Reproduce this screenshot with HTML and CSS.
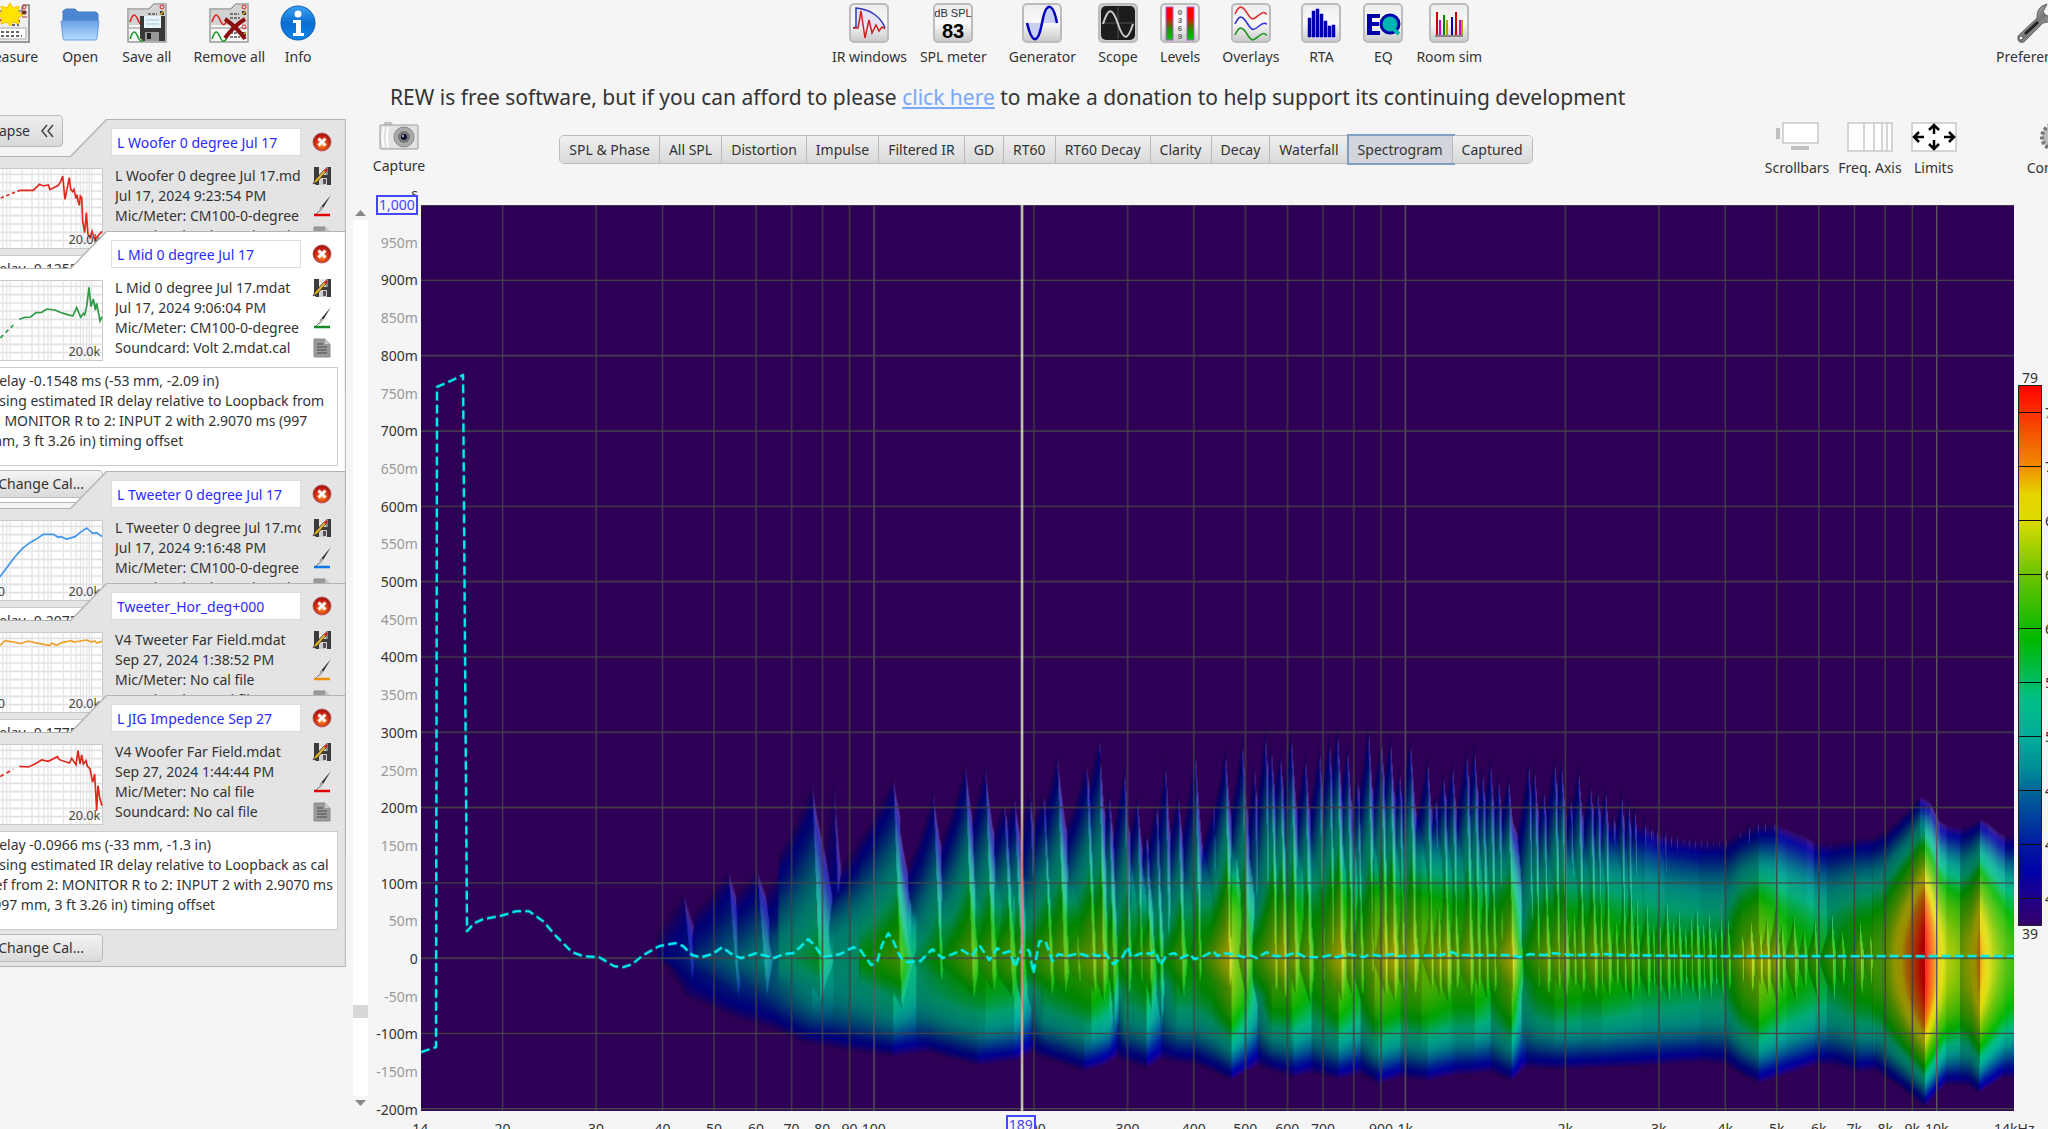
FILE: index.html
```
<!DOCTYPE html>
<html lang="en">
<head>
  <meta charset="UTF-8">
  <title>REW</title>
  <link rel="stylesheet" href="styles.css">
</head>
<body>
  <!-- shared symbols -->
  <svg class="defs" width="0" height="0">
    <defs>
      <linearGradient id="gBtn" x1="0" y1="0" x2="0" y2="1">
        <stop offset="0" stop-color="#ececec"/><stop offset=".5" stop-color="#fafafa"/><stop offset="1" stop-color="#c8c8c8"/>
      </linearGradient>
      <linearGradient id="gLevel" x1="0" y1="0" x2="0" y2="1">
        <stop offset="0" stop-color="#f00"/><stop offset=".3" stop-color="#f00"/><stop offset=".7" stop-color="#1a9a00"/><stop offset="1" stop-color="#00c000"/>
      </linearGradient>
      <linearGradient id="gFolder" x1="0" y1="0" x2="0" y2="1">
        <stop offset="0" stop-color="#6da4e6"/><stop offset="1" stop-color="#b4daff"/>
      </linearGradient>
      <linearGradient id="gInfo" x1="0" y1="0" x2="0" y2="1">
        <stop offset="0" stop-color="#3aa0f2"/><stop offset=".5" stop-color="#0a6fd0"/><stop offset="1" stop-color="#0a86e8"/>
      </linearGradient>
      <radialGradient id="gClose" cx=".5" cy=".65" r=".6">
        <stop offset="0" stop-color="#ff9a1e"/><stop offset=".6" stop-color="#d03018"/><stop offset="1" stop-color="#a81010"/>
      </radialGradient>
      <linearGradient id="gMetal" x1="0" y1="0" x2="1" y2="1">
        <stop offset="0" stop-color="#f2f2f2"/><stop offset=".5" stop-color="#777"/><stop offset="1" stop-color="#ddd"/>
      </linearGradient>
    </defs>
    <symbol id="sheets" viewBox="0 0 40 40">
      <path d="M1 6h21l5-5h12v38H1z" fill="#f7f7f7" stroke="#9a9a9a" stroke-width="1.5"/>
      <path d="M2 7h21l5-5h10v20H2z" fill="#d2d2d2"/>
      <path d="M2 25h36" stroke="#888"/>
      <path d="M3 19c3-9 5-9 8-2s5 5 7 1" fill="none" stroke="#d22" stroke-width="1.6"/>
      <path d="M3 36c3-9 5-9 8-2s5 4 7 1" fill="none" stroke="#1a9a2a" stroke-width="1.6"/>
      <path d="M21 11h9M21 15h10M21 30h9M21 34h10" stroke="#555" stroke-width="1.5" stroke-dasharray="3 1"/>
      <circle cx="35" cy="4" r="2" fill="none" stroke="#d22"/><circle cx="35" cy="24" r="2" fill="none" stroke="#d22"/>
      <path d="M33 8h4v4h-4zM33 29h4v4h-4z" fill="#333"/><path d="M33 12l4-4M33 33l4-4" stroke="#d8b020" stroke-width="1.5"/>
    </symbol>
    <symbol id="close" viewBox="0 0 20 20">
      <circle cx="10" cy="10" r="9" fill="url(#gClose)" stroke="#a55" stroke-width=".8"/>
      <path d="M6.500 6.500l7 7M13.500 6.500l-7 7" stroke="#fff" stroke-width="3"/>
    </symbol>
    <symbol id="save" viewBox="0 0 20 20">
      <path d="M2 1h17v18H4l-2-2z" fill="#3c3c3c"/>
      <path d="M7 1h7v8H7z" fill="#e8e8e8"/><path d="M14 1h2v8h-2z" fill="#888"/>
      <path d="M7 12h8v7H7z" fill="#cfcfcf"/><path d="M11 13h3v5h-3z" fill="#555"/>
      <path d="M1 18l2-4L12 4l2 2L5 16z" fill="#e2b52a" stroke="#222" stroke-width=".7"/>
      <path d="M12 4l2-2 2 2-2 2z" fill="#d22"/>
    </symbol>
    <symbol id="pen" viewBox="0 0 20 24">
      <path d="M19 1l-8 13-2 1-1-1z" fill="#2c2c2c"/><path d="M9.500 12l2 1.500-2 3-3 2.500 1-4z" fill="#aaa"/>
      <path d="M2 21h16" stroke="currentColor" stroke-width="2.500"/><path d="M7 17l-3 3" stroke="#777"/>
    </symbol>
    <symbol id="doc" viewBox="0 0 20 20">
      <path d="M2 1h11l5 5v13H2z" fill="#9a9a9a" stroke="#8c8c8c"/><path d="M13 1v5h5z" fill="#ccc"/>
      <path d="M5 6h6M5 9h10M5 12h10M5 15h10" stroke="#666" stroke-width="1.300"/>
    </symbol>
    <symbol id="grid" viewBox="-48 0 357 243">
      <path d="M-48 0h357v243h-357z" fill="#fff"/>
      <path d="M-48 19h357M-48 44h357M-48 69h357M-48 93h357M-48 118h357M-48 143h357M-48 168h357M-48 193h357M-48 218h357" stroke="#e2e2e2" stroke-width="5"/>
      <path d="M-30 0v243M8 0v243M20 0v243M30 0v243M66 0v243M96 0v243M116 0v243M132 0v243M144 0v243M153 0v243M190 0v243M213 0v243M228 0v243M241 0v243M250 0v243M260 0v243M268 0v243M275 0v243" stroke="#e6e6e6" stroke-width="4"/>
      <path d="M-48 1h356v241h-356" fill="none" stroke="#c8c8c8" stroke-width="4"/>
    </symbol>
  </svg>

  <div class="app">
    <!-- top toolbar -->
    <header class="toolbar">
      <div class="tools">
        <button class="tool">
          <svg width="40" height="40" viewBox="0 0 40 40"><path d="M1 8h30l3-6h5v37H1z" fill="#eee" stroke="#999" stroke-width="2"/><path d="M3 25h33v11H3z" fill="#fff" stroke="#aaa"/><path d="M2 17c4-4 7 3 12-1" stroke="#d22" fill="none" stroke-width="2"/><path d="M22 18h8M22 22h7M6 29h24M6 33h26" stroke="#333" stroke-width="1.500" stroke-dasharray="3 2"/><circle cx="34" cy="4" r="2" fill="none" stroke="#d22"/><path d="M32 8h4v3h-4zM32 14h5" stroke="#a33" fill="#333"/><path d="M20 0l3 5 6-2-1 6 5 3-5 3 1 6-6-2-3 4-3-4-6 2 1-6-5-3 5-3-1-6 6 2z" fill="#ffe400" stroke="#f8c400"/></svg>
          Measure</button>
        <button class="tool">
          <svg width="40" height="40" viewBox="0 0 40 40"><path d="M3 20V8l3-2h9l3 3h18l2 2v9z" fill="#4d86d0" stroke="#4478bd"/><path d="M1 18h38l-2 17q0 2-2 2H5q-2 0-2-2z" fill="url(#gFolder)" stroke="#6a9fe0"/></svg>
          Open</button>
        <button class="tool">
          <svg width="40" height="40" viewBox="0 0 40 40"><use href="#sheets"/><path d="M13 13h25v25H16l-3-3z" fill="#383838"/><path d="M17 13h17v12H17z" fill="#e8f4fc"/><path d="M19 17h13M19 21h13" stroke="#9cc"/><path d="M18 29h14v9H18z" fill="#999"/><path d="M20 30h4v6h-4z" fill="#222"/></svg>
          Save all</button>
        <button class="tool">
          <svg width="40" height="40" viewBox="0 0 40 40"><use href="#sheets"/><path d="M16 16c7 5 14 11 20 20M36 16c-8 5-14 11-20 19" stroke="#8c0e0e" stroke-width="4" fill="none"/></svg>
          Remove all</button>
        <button class="tool tight">
          <svg width="40" height="40" viewBox="0 0 40 40"><circle cx="20" cy="20" r="17" fill="url(#gInfo)" stroke="#0a5cb0"/><circle cx="20" cy="11" r="3.500" fill="#fff"/><path d="M15 17h8v13h3v3H15v-3h3V20h-3z" fill="#fff"/></svg>
          Info</button>
      </div>

      <div class="tools">
        <button class="tool">
          <svg width="40" height="40" viewBox="0 0 40 40"><rect x="1" y="1" width="38" height="38" rx="4" fill="url(#gBtn)" stroke="#bcbcbc" stroke-width="2"/><path d="M8 24V5c14 2 24 10 28 20z" fill="#e4e4f6"/><path d="M4 25l3-1V5c14 1 25 9 29 20" fill="none" stroke="#33b" stroke-width="1.500"/><path d="M4 25h5l3-17 4 27 4-18 3 13 4-8 3 6 3-4 3 2" fill="none" stroke="#c22" stroke-width="1.500"/></svg>
          IR windows</button>
        <button class="tool tight">
          <svg width="40" height="40" viewBox="0 0 40 40"><rect x="1" y="1" width="38" height="38" rx="4" fill="url(#gBtn)" stroke="#bcbcbc" stroke-width="2"/><text x="20" y="14" text-anchor="middle" class="ic-small">dB SPL</text><text x="20" y="35" text-anchor="middle" class="ic-num">83</text></svg>
          SPL meter</button>
        <button class="tool">
          <svg width="40" height="40" viewBox="0 0 40 40"><rect x="1" y="1" width="38" height="38" rx="4" fill="url(#gBtn)" stroke="#bcbcbc" stroke-width="2"/><path d="M5 20c5 18 10 26 15 0zM20 20c4-22 11-22 15 0z" fill="#c9cff2"/><path d="M5 20c5 21 11 22 15 0s11-21 15 0" fill="none" stroke="#00b" stroke-width="2.500"/></svg>
          Generator</button>
        <button class="tool">
          <svg width="40" height="40" viewBox="0 0 40 40"><rect x="1" y="1" width="38" height="38" rx="4" fill="#ccc" stroke="#bcbcbc" stroke-width="2"/><rect x="3" y="3" width="34" height="34" rx="5" fill="#1c1c1c"/><path d="M20 4v32M4 20h32" stroke="#555"/><path d="M5 21c5-16 9-18 15 0s10 16 15 0" fill="none" stroke="#ccc" stroke-width="2"/></svg>
          Scope</button>
        <button class="tool">
          <svg width="40" height="40" viewBox="0 0 40 40"><rect x="1" y="1" width="38" height="38" rx="4" fill="url(#gBtn)" stroke="#bcbcbc" stroke-width="2"/><rect x="6" y="4" width="7" height="33" fill="url(#gLevel)" stroke="#a6c"/><rect x="27" y="4" width="7" height="33" fill="url(#gLevel)" stroke="#a6c"/><text x="20" y="12" text-anchor="middle" class="ic-tiny">0</text><text x="20" y="20" text-anchor="middle" class="ic-tiny">3</text><text x="20" y="28" text-anchor="middle" class="ic-tiny">6</text><text x="20" y="36" text-anchor="middle" class="ic-tiny">9</text></svg>
          Levels</button>
        <button class="tool">
          <svg width="40" height="40" viewBox="0 0 40 40"><rect x="1" y="1" width="38" height="38" rx="4" fill="url(#gBtn)" stroke="#bcbcbc" stroke-width="2"/><g fill="none" stroke-width="1.600"><path d="M4 11c4-9 7-9 12-1s6 7 12 2 6-1 8-1" stroke="#d33"/><path d="M4 21c4-9 7-9 12-1s6 8 12 3 6-2 8-2" stroke="#33d"/><path d="M4 32c4-9 7-9 12-1s6 7 12 2 6-1 8-1" stroke="#292"/></g></svg>
          Overlays</button>
        <button class="tool">
          <svg width="40" height="40" viewBox="0 0 40 40"><rect x="1" y="1" width="38" height="38" rx="4" fill="url(#gBtn)" stroke="#bcbcbc" stroke-width="2"/><path d="M7 34V15h3v19zM11 34V8h3v26zM15 34V6h3v28zM19 34V11h3v23zM23 34V18h3v16zM27 34V23h3v11zM31 34V22h3v12z" fill="#00a" stroke="#00a" stroke-width=".5"/></svg>
          RTA</button>
        <button class="tool">
          <svg width="40" height="40" viewBox="0 0 40 40"><rect x="1" y="1" width="38" height="38" rx="4" fill="url(#gBtn)" stroke="#bcbcbc" stroke-width="2"/><path d="M4 11h13v4H9v4h7v4H9v5h8v4H4z" fill="#00a"/><circle cx="27" cy="21" r="9" fill="#00b4b4" stroke="#00a" stroke-width="3"/><path d="M28 24l8 7" stroke="#00b4b4" stroke-width="4"/></svg>
          EQ</button>
        <button class="tool tight">
          <svg width="40" height="40" viewBox="0 0 40 40"><rect x="1" y="1" width="38" height="38" rx="4" fill="url(#gBtn)" stroke="#bcbcbc" stroke-width="2"/><g stroke-width="2"><path d="M8 9v23M27 9v23" stroke="#c00"/><path d="M11 17v15M31 17v15" stroke="#c0c"/><path d="M15 12v20" stroke="#080"/><path d="M18 17v15M33 17v15" stroke="#b90"/><path d="M23 14v18" stroke="#00b"/></g><path d="M6 33h28" stroke="#333"/></svg>
          Room sim</button>
      </div>

      <div class="tools">
        <button class="tool">
          <svg width="40" height="40" viewBox="0 0 40 40"><path d="M3 33L22 15q-1-11 10-14l-4 8 4 4 7-3q0 9-11 10L9 39q-7 2-6-6z" fill="url(#gMetal)" stroke="#666"/><path d="M10 31l13-12" stroke="#222" stroke-width="3"/><circle cx="6" cy="35" r="2" fill="#fff" stroke="#555"/></svg>
          Preferences</button>
      </div>
    </header>

    <p class="donate">REW is free software, but if you can afford to please <a href="#donate">click here</a> to make a donation to help support its continuing development</p>

    <main class="main">
      <!-- measurements -->
      <aside class="sidebar">
        <button class="collapse">Collapse
          <svg width="14" height="14" viewBox="0 0 14 14"><path d="M7 1L2 7l5 6M13 1L8 7l5 6" fill="none" stroke="#444" stroke-width="1.500"/></svg>
        </button>

        <section class="card short">
          <div class="card-head"><input type="text" aria-label="Measurement name" value="L Woofer 0 degree Jul 17"><button class="icon" aria-label="Remove"><svg width="20" height="20"><use href="#close"/></svg></button></div>
          <div class="card-body">
            <svg class="thumb" viewBox="-48 0 357 243"><use href="#grid" x="-48" width="357" height="243"/><g fill="none" stroke="#e0281e" stroke-width="5"><path d="M-48 110L0 91L60 67" stroke-dasharray="10 8"/><path d="M60 67L100 67L118 49L130 54L145 51L150 65L175 52L182 40L188 24L195 94L208 29L212 64L218 71L222 64L228 92L231 80L234 99L238 112L241 84L245 89L248 160L254 194L259 134L264 199L270 209L276 190L284 215L306 190"/></g><text x="301" y="227" text-anchor="end">20.0k</text></svg>
            <div class="info">L Woofer 0 degree Jul 17.mdat<br>Jul 17, 2024 9:23:54 PM<br>Mic/Meter: CM100-0-degree<br>Soundcard: Volt 2.mdat.cal</div>
            <div class="icons"><button class="icon" aria-label="Save"><svg width="20" height="20"><use href="#save"/></svg></button><button class="icon red" aria-label="Colour"><svg width="20" height="24"><use href="#pen"/></svg></button><button class="icon" aria-label="Notes"><svg width="20" height="20"><use href="#doc"/></svg></button></div>
          </div>
          <div class="note">Delay -0.1255 ms</div>
        </section>

        <section class="card selected">
          <div class="card-head"><input type="text" aria-label="Measurement name" value="L Mid 0 degree Jul 17"><button class="icon" aria-label="Remove"><svg width="20" height="20"><use href="#close"/></svg></button></div>
          <div class="card-body">
            <svg class="thumb" viewBox="-48 0 357 243"><use href="#grid" x="-48" width="357" height="243"/><g fill="none" stroke="#2f9a44" stroke-width="5"><path d="M-30 205L5 170L40 135" stroke-dasharray="12 10"/><path d="M58 118L75 112L92 111L108 98L125 97L140 87L165 90L180 97L200 103L218 108L230 83L242 112L250 100L254 105L260 80L267 22L273 80L280 57L286 90L290 70L300 123L306 110"/></g><text x="301" y="227" text-anchor="end">20.0k</text></svg>
            <div class="info">L Mid 0 degree Jul 17.mdat<br>Jul 17, 2024 9:06:04 PM<br>Mic/Meter: CM100-0-degree<br>Soundcard: Volt 2.mdat.cal</div>
            <div class="icons"><button class="icon" aria-label="Save"><svg width="20" height="20"><use href="#save"/></svg></button><button class="icon green" aria-label="Colour"><svg width="20" height="24"><use href="#pen"/></svg></button><button class="icon" aria-label="Notes"><svg width="20" height="20"><use href="#doc"/></svg></button></div>
          </div>
          <div class="note">Delay -0.1548 ms (-53 mm, -2.09 in)<br>Using estimated IR delay relative to Loopback from<br>2: MONITOR R to 2: INPUT 2 with 2.9070 ms (997<br>mm, 3 ft 3.26 in) timing offset</div>
          <button class="change">Change Cal...</button>
        </section>

        <section class="card short">
          <div class="card-head"><input type="text" aria-label="Measurement name" value="L Tweeter 0 degree Jul 17"><button class="icon" aria-label="Remove"><svg width="20" height="20"><use href="#close"/></svg></button></div>
          <div class="card-body">
            <svg class="thumb" viewBox="-48 0 357 243"><use href="#grid" x="-48" width="357" height="243"/><g fill="none" stroke="#3f94f0" stroke-width="5"><path d="M-30 200L0 170L45 110L70 83L90 68L108 58L130 43L160 43L175 52L182 50L200 57L225 50L240 38L260 24L270 33L278 40L290 38L306 50"/></g><text x="15" y="227" text-anchor="end">20</text><text x="301" y="227" text-anchor="end">20.0k</text></svg>
            <div class="info">L Tweeter 0 degree Jul 17.mdat<br>Jul 17, 2024 9:16:48 PM<br>Mic/Meter: CM100-0-degree<br>Soundcard: Volt 2.mdat.cal</div>
            <div class="icons"><button class="icon" aria-label="Save"><svg width="20" height="20"><use href="#save"/></svg></button><button class="icon blue" aria-label="Colour"><svg width="20" height="24"><use href="#pen"/></svg></button><button class="icon" aria-label="Notes"><svg width="20" height="20"><use href="#doc"/></svg></button></div>
          </div>
          <div class="note">Delay -0.2073 ms</div>
        </section>

        <section class="card short">
          <div class="card-head"><input type="text" aria-label="Measurement name" value="Tweeter_Hor_deg+000"><button class="icon" aria-label="Remove"><svg width="20" height="20"><use href="#close"/></svg></button></div>
          <div class="card-body">
            <svg class="thumb" viewBox="-48 0 357 243"><use href="#grid" x="-48" width="357" height="243"/><g fill="none" stroke="#f0a030" stroke-width="5"><path d="M-40 60L0 40L15 26L50 32L60 35L85 27L105 32L135 38L150 40L155 33L170 40L185 32L215 26L220 30L260 24L275 30L285 27L290 33L306 28"/></g><text x="15" y="227" text-anchor="end">20</text><text x="301" y="227" text-anchor="end">20.0k</text></svg>
            <div class="info">V4 Tweeter Far Field.mdat<br>Sep 27, 2024 1:38:52 PM<br>Mic/Meter: No cal file<br>Soundcard: No cal file</div>
            <div class="icons"><button class="icon" aria-label="Save"><svg width="20" height="20"><use href="#save"/></svg></button><button class="icon orange" aria-label="Colour"><svg width="20" height="24"><use href="#pen"/></svg></button><button class="icon" aria-label="Notes"><svg width="20" height="20"><use href="#doc"/></svg></button></div>
          </div>
          <div class="note">Delay -0.1775 ms</div>
        </section>

        <section class="card">
          <div class="card-head"><input type="text" aria-label="Measurement name" value="L JIG Impedence Sep 27"><button class="icon" aria-label="Remove"><svg width="20" height="20"><use href="#close"/></svg></button></div>
          <div class="card-body">
            <svg class="thumb" viewBox="-48 0 357 243"><use href="#grid" x="-48" width="357" height="243"/><g fill="none" stroke="#e0281e" stroke-width="5"><path d="M-40 115L0 98L40 75" stroke-dasharray="12 10"/><path d="M58 67L85 69L105 60L125 48L145 52L172 38L178 47L208 57L215 43L228 62L234 20L240 60L245 33L250 60L258 50L262 66L270 75L278 115L284 90L290 200L294 125L300 165L306 185"/></g><text x="301" y="227" text-anchor="end">20.0k</text></svg>
            <div class="info">V4 Woofer Far Field.mdat<br>Sep 27, 2024 1:44:44 PM<br>Mic/Meter: No cal file<br>Soundcard: No cal file</div>
            <div class="icons"><button class="icon" aria-label="Save"><svg width="20" height="20"><use href="#save"/></svg></button><button class="icon red" aria-label="Colour"><svg width="20" height="24"><use href="#pen"/></svg></button><button class="icon" aria-label="Notes"><svg width="20" height="20"><use href="#doc"/></svg></button></div>
          </div>
          <div class="note">Delay -0.0966 ms (-33 mm, -1.3 in)<br>Using estimated IR delay relative to Loopback as cal<br>ref from 2: MONITOR R to 2: INPUT 2 with 2.9070 ms<br>(997 mm, 3 ft 3.26 in) timing offset</div>
          <button class="change">Change Cal...</button>
        </section>
      </aside>

      <!-- graph -->
      <section class="graph">
        <div class="graph-bar">
          <button class="tool capture">
            <svg width="40" height="28" viewBox="0 0 40 28"><path d="M6 0h6v4H6z" fill="#ccc" stroke="#aaa"/><rect x="1" y="3" width="38" height="24" rx="1" fill="#e2e2e2" stroke="#999"/><path d="M5 5q-3 10 0 20M9 5q-2 10 0 20" stroke="#fff" stroke-width="2" fill="none"/><circle cx="25" cy="15" r="10" fill="#aaa" stroke="#888"/><circle cx="25" cy="15" r="6" fill="#777"/><circle cx="25" cy="15" r="3" fill="#113"/><circle cx="24" cy="14" r="1" fill="#cde"/></svg>
            Capture</button>
          <nav class="tabs">
            <button>SPL &amp; Phase</button><button>All SPL</button><button>Distortion</button><button>Impulse</button><button>Filtered IR</button><button>GD</button><button>RT60</button><button>RT60 Decay</button><button>Clarity</button><button>Decay</button><button>Waterfall</button><button class="active">Spectrogram</button><button>Captured</button>
          </nav>
          <div class="view-tools">
            <button class="tool">
              <svg width="46" height="30" viewBox="0 0 46 30"><rect x="9" y="1" width="35" height="20" fill="#fff" stroke="#c8c8c8" stroke-width="1.500"/><path d="M2 6h4v11H2zM17 24h18v4H17z" fill="#c0c0c0"/></svg>
              Scrollbars</button>
            <button class="tool">
              <svg width="46" height="30" viewBox="0 0 46 30"><path d="M1 1h44v28H1zM17 1v28M27 1v28M35 1v28M40 1v28" fill="#fff" stroke="#c8c8c8" stroke-width="1.500"/></svg>
              Freq. Axis</button>
            <button class="tool">
              <svg width="46" height="30" viewBox="0 0 46 30"><rect x="1" y="1" width="44" height="28" fill="#fff" stroke="#c8c8c8" stroke-width="1.500"/><path d="M23 12V4M18 8l5-5 5 5M23 18v8M18 22l5 5 5-5M13 15H4M8 10l-5 5 5 5M33 15h9M38 10l5 5-5 5" fill="none" stroke="#000" stroke-width="2.500"/></svg>
              Limits</button>
            <button class="tool controls">
              <svg width="30" height="30" viewBox="0 0 30 30"><circle cx="15" cy="15" r="12" fill="#bbb" stroke="#777" stroke-width="4" stroke-dasharray="3 2"/><circle cx="15" cy="15" r="5" fill="#f5f5f5" stroke="#888"/></svg>
              Controls</button>
          </div>
        </div>

        <div class="plot">
          <div class="scroll">
            <button aria-label="Scroll up"><svg width="11" height="7" viewBox="0 0 11 7"><path d="M0 7l5.500-6L11 7z" fill="#888"/></svg></button>
            <div class="track"><div class="knob"></div></div>
            <button aria-label="Scroll down"><svg width="11" height="7" viewBox="0 0 11 7"><path d="M0 0l5.500 6L11 0z" fill="#888"/></svg></button>
          </div>
          <div class="y-axis" id="yAxis"></div>
          <canvas id="spectrogram" width="1592" height="907"></canvas>
          <div class="legend">
            <span>79</span>
            <ul>
              <li>77</li><li>73</li><li>69</li><li>65</li><li>61</li><li>57</li><li>53</li><li>49</li><li>45</li><li>41</li>
            </ul>
            <span>39</span>
          </div>
          <div class="x-axis" id="xAxis"></div>
        </div>
      </section>
    </main>
  </div>
  <script src="script.js"></script>
</body>
</html>
```
FILE: styles.css
```
* {
  box-sizing: border-box;
}
body {
  margin: 0;
  height: 100vh;
  overflow: hidden;
  background: #f5f5f5;
  color: #333;
  font-family: "Noto Sans", "Open Sans", sans-serif;
  font-size: 14px;
  line-height: 20px;
}
button {
  font: inherit;
  color: inherit;
  background: none;
  border: none;
  padding: 0;
  white-space: nowrap;
}
.defs {
  position: absolute;
}
.app {
  display: flex;
  flex-direction: column;
  height: 100vh;
  margin: 0 -34px 0 -24px;
}

/* top toolbar */
.toolbar {
  display: flex;
  justify-content: space-between;
  padding: 3px 8px 0 5px;
}
.tools {
  display: flex;
  gap: 22px;
}
.tool {
  display: flex;
  flex-direction: column;
  align-items: center;
  gap: 4px;
}
.tool.tight {
  margin-left: -9px;
}
.ic-small {
  font: 11px "Liberation Sans", sans-serif;
  fill: #333;
}
.ic-num {
  font: bold 20px "Liberation Sans", sans-serif;
}
.ic-tiny {
  font: bold 8px "Liberation Sans", sans-serif;
  fill: #666;
}
.donate {
  margin: 16px 0 4px;
  padding-left: 414px;
  font-size: 21px;
  line-height: 28px;
  white-space: nowrap;
}
.donate a {
  color: #7ba7f7;
}

.main {
  flex: 1;
  display: flex;
  min-height: 0;
}

/* measurement list */
.sidebar {
  flex: 0 0 369px;
  padding-left: 4px;
}
.collapse {
  display: flex;
  align-items: center;
  justify-content: flex-end;
  gap: 10px;
  width: 83px;
  height: 32px;
  margin-bottom: -28px;
  padding-right: 8px;
  background: linear-gradient(#eee, #d9d9d9);
  border: 1px solid #bbb;
  border-radius: 4px;
}
.collapse svg {
  flex-shrink: 0;
}
.card {
  position: relative;
  height: 272px;
  padding: 9px 8px 0 4px;
  background: #b4b4b4;
  clip-path: polygon(0 37px, 90px 37px, 126px 0, 100% 0, 100% 100%, 0 100%);
}
.card::before {
  content: "";
  position: absolute;
  inset: 0;
  background: #e4e4e4;
  clip-path: polygon(0 38px, 91px 38px, 127px 1px, calc(100% - 1px) 1px, calc(100% - 1px) calc(100% - 1px), 0 calc(100% - 1px));
}
.card > * {
  position: relative;
}
.card.selected {
  margin-bottom: -32px;
}
.card.selected::before {
  background: #fff;
}
.card.short {
  margin-bottom: -160px;
}
.card-head {
  display: flex;
  align-items: center;
  gap: 11px;
  padding-left: 127px;
}
.card-head input {
  width: 190px;
  height: 28px;
  padding: 0 5px;
  border: 1px solid #dcdcdc;
  background: #fff;
  color: #2a2aff;
  font: inherit;
}
.icon {
  display: flex;
}
.card-body {
  display: flex;
  margin-top: 12px;
  height: 84px;
}
.thumb {
  width: 119px;
  height: 81px;
}
.thumb text {
  font-size: 38px;
  fill: #444;
}
.info {
  width: 186px;
  margin: -2px 11px 0 12px;
  height: 84px;
  overflow: hidden;
  white-space: nowrap;
}
.icons {
  display: flex;
  flex-direction: column;
  gap: 8px;
  margin-top: -2px;
}
.red { color: #e00000; }
.green { color: #148a28; }
.blue { color: #0a78e8; }
.orange { color: #f09000; }
.note {
  height: 99px;
  margin-top: 3px;
  padding: 3px 4px;
  background: #fff;
  border: 1px solid #ccc;
  white-space: nowrap;
  overflow: hidden;
}
.change {
  width: 119px;
  height: 28px;
  margin-top: 4px;
  padding-right: 18px;
  text-align: right;
  background: linear-gradient(#f4f4f4, #dadada);
  border: 1px solid #bbb;
  border-radius: 4px;
}

/* graph */
.graph {
  flex: 1;
  display: flex;
  flex-direction: column;
  padding-left: 7px;
}
.graph-bar {
  display: flex;
  align-items: flex-start;
  height: 90px;
  padding: 7px 0 0 20px;
}
.graph-bar .tool {
  gap: 6px;
}
.tabs {
  display: flex;
  margin: 13px auto 0 134px;
  border: 1px solid #bbb;
  border-radius: 5px;
}
.tabs button {
  height: 27px;
  padding: 0 9px;
  background: linear-gradient(#f0f0f0, #d9d9d9);
  border-right: 1px solid #bbb;
}
.tabs button:first-child {
  border-radius: 4px 0 0 4px;
}
.tabs button:last-child {
  border-right: none;
  border-radius: 0 4px 4px 0;
}
.tabs .active {
  background: #d2d6dc;
  box-shadow: 0 0 0 2px #7f9fc4;
}
.view-tools {
  display: flex;
  gap: 9px;
}
.view-tools .controls {
  margin-left: 61px;
}
.plot {
  flex: 1;
  display: grid;
  grid-template-columns: 15px 53px 1fr 68px;
  grid-template-rows: 1fr 18px;
  min-height: 0;
}
.scroll {
  display: flex;
  flex-direction: column;
}
.scroll button {
  display: flex;
  align-items: center;
  justify-content: center;
  height: 15px;
}
.track {
  flex: 1;
  background: #fff;
}
.knob {
  height: 13px;
  margin-top: 785px;
  background: #d8d8d8;
}
.y-axis {
  display: flex;
  flex-direction: column;
  justify-content: space-between;
  align-items: flex-end;
  margin: -10px 3px -9px 0;
  position: relative;
}
.y-axis .minor {
  color: #999;
}
.unit {
  position: absolute;
  right: 0;
  top: -11px;
}
.marker {
  background: #f5f5f5;
  border: 2px solid #4646ff;
  color: #4646ff;
  line-height: 16px;
  padding: 0 1px;
  position: relative;
}
#spectrogram {
  width: 100%;
  height: 100%;
  min-height: 0;
}
.x-axis {
  grid-column: 3;
  position: relative;
}
.x-axis span {
  position: absolute;
  top: 8px;
  transform: translateX(-50%);
}
.x-axis .marker {
  top: 4px;
  position: absolute;
}
.legend {
  display: flex;
  flex-direction: column;
  padding: 165px 0 0 4px;
  line-height: 15px;
}
.legend span {
  width: 24px;
  text-align: center;
}
.legend ul {
  display: flex;
  flex-direction: column;
  flex: 0 0 73%;
  margin: 0;
  padding: 0;
  width: 24px;
  list-style: none;
  outline: 1px solid #222;
  outline-offset: -1px;
  background: linear-gradient(#f00 0%, #f08c00 15%, #e8d200 20%, #dcdc00 25%, #6cc400 35%, #00b800 47%, #00bf86 58%, #00a99a 66%, #008c98 71%, #00679a 75%, #0019a0 85%, #0000a8 90%, #20008a 95%, #330068 100%);
}
.legend li {
  flex: 1;
  display: flex;
  align-items: center;
  gap: 3px;
}
.legend li::before {
  content: "";
  flex: 0 0 24px;
  height: 1px;
  background: #111;
}
```
FILE: script.js
```
// graph area in window pixels
const LEFT = 421, TOP = 205, W = 1592, H = 907;
const ZERO = 959;   // y of 0 s
const X100 = 873.7; // x of 100 Hz
const DECADE = 531;

const canvas = document.getElementById('spectrogram');
const ctx = canvas.getContext('2d');

function freqX(f) {
  return X100 + DECADE * Math.log10(f / 100);
}

// colour scale, level in dB
const scale = [
  [39, 51, 0, 100], [41, 32, 0, 138], [43, 0, 0, 168], [45, 0, 25, 160], [49, 0, 103, 154],
  [51, 0, 140, 152], [53, 0, 169, 154], [56, 0, 191, 134], [60, 0, 184, 0], [65, 108, 196, 0],
  [69, 220, 220, 0], [71, 232, 210, 0], [73, 240, 140, 0], [77, 255, 50, 0], [79, 255, 0, 0]
];

function interp(table, x, col) {
  if (x <= table[0][0]) return table[0][col];
  for (let i = 1; i < table.length; i++) {
    if (x <= table[i][0]) {
      const a = table[i - 1], b = table[i];
      const t = (x - a[0]) / (b[0] - a[0]);
      return a[col] + (b[col] - a[col]) * t;
    }
  }
  return table[table.length - 1][col];
}

// peak level over x
const level = [
  [655, 40.5], [668, 42], [690, 45], [727, 48], [756, 49], [787, 53], [811, 56], [832, 55], [864, 57], [892, 60],
  [915, 57], [932, 59], [957, 61], [984, 62], [1013, 61], [1030, 55], [1042, 61], [1056, 62], [1090, 64],
  [1108, 62], [1116, 53], [1123, 60], [1145, 62], [1160, 55], [1175, 61], [1194, 61], [1212, 63], [1230, 68],
  [1245, 63], [1256, 57], [1270, 65], [1290, 65], [1310, 62], [1337, 66], [1359, 62], [1373, 67], [1399, 65],
  [1420, 66], [1450, 64], [1473, 64], [1489, 62], [1510, 67], [1520, 58], [1535, 62], [1553, 64], [1580, 63],
  [1600, 63], [1640, 61], [1700, 60], [1724, 60], [1740, 65], [1757, 67], [1765, 66], [1785, 63], [1812, 61],
  [1825, 60], [1857, 63], [1880, 64], [1900, 71], [1923, 80], [1935, 72], [1944, 68], [1958, 66], [1968, 68],
  [1978, 73], [1990, 68], [2003, 64], [2013, 62]
];

// lower edge over x
const lower = [
  [655, 958], [668, 970], [686, 1000], [712, 1010], [739, 1022], [770, 1030], [802, 1044], [846, 1052], [891, 1058],
  [927, 1054], [976, 1067], [1016, 1062], [1030, 1055], [1083, 1073], [1100, 1068], [1116, 1060], [1145, 1070],
  [1160, 1062], [1194, 1066], [1230, 1082], [1256, 1068], [1292, 1079], [1310, 1075], [1337, 1081], [1359, 1076],
  [1377, 1086], [1399, 1079], [1426, 1083], [1453, 1077], [1489, 1074], [1510, 1083], [1524, 1070], [1564, 1071],
  [1640, 1068], [1698, 1064], [1724, 1066], [1739, 1076], [1757, 1085], [1773, 1080], [1813, 1067], [1833, 1067],
  [1857, 1074], [1873, 1072], [1900, 1090], [1923, 1108], [1943, 1087], [1967, 1087], [1977, 1095], [2000, 1080], [2013, 1080]
];

// upper edge between the ridges
const upper = [
  [655, 958], [668, 920], [700, 925], [740, 920], [775, 905], [800, 860], [825, 895], [860, 850], [873, 900], [888, 840], [910, 885],
  [925, 880], [960, 845], [990, 850], [1012, 840], [1030, 880], [1060, 850], [1090, 840], [1116, 890], [1130, 840],
  [1160, 870], [1194, 840], [1210, 845], [1235, 820], [1256, 850], [1300, 815], [1340, 810], [1400, 810], [1460, 810],
  [1510, 815], [1522, 850], [1540, 820], [1600, 820], [1643, 825], [1663, 835], [1697, 840], [1725, 840], [1738, 832],
  [1756, 824], [1773, 823], [1790, 830], [1805, 836], [1812, 841], [1830, 842], [1858, 837], [1870, 837], [1885, 830],
  [1900, 816], [1910, 806], [1918, 796], [1928, 801], [1938, 820], [1945, 824], [1960, 827], [1968, 824], [1978, 818],
  [1986, 822], [1995, 830], [2003, 835], [2013, 834]
];

// decay ridges: x, top and level where it is not the one of the curve above
const ridges = [
  [682, 887], [727, 867], [756, 867], [787, 850, 51], [811, 780, 59], [832, 762, 46], [864, 828, 58], [892, 774, 64], [910, 866, 54], [923, 862, 55],
  [932, 787], [957, 815, 57], [964, 758], [984, 762], [1003, 800], [1013, 792], [1028, 780, 56], [1042, 790], [1050, 772, 55],
  [1056, 750], [1070, 830], [1085, 758], [1098, 731], [1108, 786], [1123, 759], [1136, 791], [1145, 830], [1155, 797], [1164, 750],
  [1177, 788], [1194, 740], [1212, 801], [1224, 743], [1241, 731], [1253, 751, 58], [1264, 720], [1270, 737], [1279, 745],
  [1290, 724], [1304, 747], [1318, 737], [1328, 731], [1336, 721], [1346, 737], [1356, 770], [1367, 716], [1380, 730], [1389, 730],
  [1398, 762], [1409, 731], [1426, 750], [1434, 790], [1442, 767], [1451, 755], [1465, 741], [1473, 737], [1481, 762], [1489, 753],
  [1497, 769], [1507, 771], [1527, 750], [1533, 758], [1542, 782], [1553, 750], [1560, 755], [1569, 790], [1577, 760], [1589, 777],
  [1596, 782], [1604, 779], [1612, 805], [1620, 783], [1627, 793], [1633, 798], [1643, 813], [1649, 818], [1655, 820], [1663, 823],
  [1669, 828], [1675, 829], [1681, 833], [1687, 832], [1693, 834], [1699, 835], [1705, 835], [1711, 836], [1717, 836],
  [1724, 836], [1738, 827], [1747, 818], [1756, 816], [1763, 817], [1772, 818], [1778, 824], [1790, 829], [1800, 835],
  [1811, 839], [1828, 839], [1838, 840], [1856, 835], [1866, 836]
];

const ridgeLevels = ridges.map((r, i) => {
  return r[2] || Math.min(interp(level, r[0], 1) + 2 + (i * 7 % 5) * 0.5, 70);
});

function columnLevels(x) {
  const p = interp(level, x, 1) - (x > 1870 ? 0 : 1);
  const lo = interp(lower, x, 1) - ZERO;
  const up = ZERO - interp(upper, x, 1);
  const near = [];
  const reach = x < 950 ? 34 : 22;
  ridges.forEach((r, i) => {
    if (Math.abs(x - r[0]) < reach) near.push(i);
  });
  const wide = x < 900 ? 0.3 : x < 1100 ? 0.5 : x < 1600 ? 0.8 : 1;
  if (lo <= 0 || up <= 0) return () => 39;
  return function (y) {
    const h = ZERO - y;
    let v;
    if (h < 0) {
      v = 39 + (p - 39) * (1 - Math.pow(-h / lo, 2.3));
    } else {
      v = 39 + (p - 39) * (1 - Math.pow(h / up, 2));
    }
    for (const i of near) {
      const top = ZERO - ridges[i][1];
      const pi = ridgeLevels[i];
      // ridge leans to the right as it gets closer to 0
      const lean = x > 1600 ? 3 : x < 1100 ? 7 : 4;
      const cx = ridges[i][0] + lean * (1 - Math.max(h, -60) / top);
      let d = x - cx;
      d = d < 0 ? -d * 0.5 : d * 1.7;
      let u;
      if (h >= 0) u = 39 + (pi - 39) * (1 - Math.pow(h / top, 1.2)) - d * wide * (0.7 + h / 110);
      else u = 39 + (pi - 39) * (1 - Math.pow(-h / lo, 1.35)) - d * wide * 0.7;
      if (u > v) v = u;
    }
    return Math.max(v, 39);
  };
}

function drawSpectrogram() {
  const img = ctx.createImageData(W, H);
  const data = img.data;
  let prev = columnLevels(LEFT - 1);
  for (let i = 0; i < W; i++) {
    const cur = columnLevels(LEFT + i);
    for (let j = 0; j < H; j++) {
      const y = TOP + j;
      const o = (j * W + i) * 4;
      let r = 46, g = 0, b = 85;
      if (y > 700 && i > 225) {
        const v = cur(y);
        if (v > 39) {
          const slope = v - prev(y);
          r = interp(scale, v, 1);
          g = interp(scale, v, 2);
          b = interp(scale, v, 3);
          // light comes from the right
          const t = slope / (Math.abs(slope) + 0.22);
          const dark = t > 0 ? 0.76 - 0.14 * t : 0.76 + 0.24 * Math.min(1, -t * 2);
          const white = t < 0 ? 0.3 * t * t * (y > ZERO ? Math.max(0, 1 - (y - ZERO) / 80) : 1) : 0;
          r = r * dark * (1 - white) + 255 * white;
          g = g * dark * (1 - white) + 255 * white;
          b = b * dark * (1 - white) + 255 * white;
          const fade = Math.min(1, (v - 39) / 1.5);
          r = 46 + (r - 46) * fade;
          g = g * fade;
          b = 85 + (b - 85) * fade;
        }
      }
      data[o] = r;
      data[o + 1] = g;
      data[o + 2] = b;
      data[o + 3] = 255;
    }
    prev = cur;
  }
  ctx.putImageData(img, 0, 0);
}

function drawGrid() {
  ctx.lineWidth = 1.4;
  for (let d = 10; d <= 10000; d *= 10) {
    for (let m = 1; m < 10; m++) {
      const f = d * m;
      if (f < 15 || f > 13000 || (d === 10000 && m > 1)) continue;
      ctx.strokeStyle = m === 1 ? '#5c5864' : '#424244';
      line(freqX(f), TOP, freqX(f), TOP + H);
    }
  }
  ctx.strokeStyle = '#444448';
  for (let s = 10; s >= -2; s--) {
    const y = ZERO - s * 75.4;
    line(LEFT, y, LEFT + W, y);
  }
}

function line(x1, y1, x2, y2) {
  ctx.beginPath();
  ctx.moveTo(x1, y1);
  ctx.lineTo(x2, y2);
  ctx.stroke();
}

// peak energy time
const trace = [
  421, 1053, 436, 1048, 437, 387, 451, 381, 463, 375, 467, 932, 474, 924, 483, 920, 503, 916, 516, 912, 529, 912, 543, 922,
  556, 937, 572, 953, 583, 957, 599, 958, 614, 967, 623, 968, 632, 965, 643, 956, 659, 947, 675, 944, 683, 947, 692, 956,
  701, 958, 712, 955, 722, 948, 733, 956, 741, 959, 756, 954, 773, 959, 784, 955, 793, 954, 800, 948, 808, 940, 815, 947,
  822, 958, 840, 955, 853, 948, 860, 951, 871, 966, 877, 962, 882, 945, 888, 934, 893, 942, 900, 958, 907, 963, 920, 962,
  932, 950, 942, 959, 962, 951, 971, 957, 979, 946, 989, 961, 997, 949, 1003, 954, 1009, 952, 1015, 968, 1022, 947,
  1029, 952, 1033, 974, 1039, 942, 1045, 942, 1052, 962, 1058, 955, 1067, 957, 1078, 954, 1087, 957, 1092, 955, 1098, 957,
  1104, 953, 1113, 965, 1122, 958, 1127, 948, 1131, 958, 1144, 953, 1149, 955, 1155, 952, 1160, 966, 1166, 956, 1174, 954,
  1180, 959, 1189, 955, 1194, 960, 1203, 957, 1213, 952, 1217, 957, 1222, 954, 1233, 955, 1243, 958, 1250, 956, 1256, 959,
  1266, 953, 1274, 957, 1285, 957, 1295, 953, 1305, 958, 1321, 958, 1329, 956, 1336, 958, 1348, 955, 1363, 958, 1369, 955,
  1381, 957, 1391, 955, 1397, 957, 1439, 956, 1452, 953, 1457, 956, 1511, 956, 1519, 958, 1529, 955, 1544, 956, 1552, 954,
  1573, 956, 1605, 955, 1622, 956, 1700, 957, 2013, 957
];

function drawTrace() {
  ctx.strokeStyle = '#00f0f0';
  ctx.lineWidth = 2.5;
  ctx.lineJoin = 'round';
  ctx.setLineDash([9, 4]);
  ctx.beginPath();
  for (let i = 0; i < trace.length; i += 2) ctx.lineTo(trace[i], trace[i + 1]);
  ctx.stroke();
  ctx.setLineDash([]);
}

function drawCursor() {
  const x = freqX(189.9);
  const grad = ctx.createLinearGradient(0, TOP, 0, TOP + H);
  grad.addColorStop(0, '#eaffd0');
  grad.addColorStop(0.66, '#eaffd0');
  grad.addColorStop(0.74, '#ff7a50');
  grad.addColorStop(0.8, '#ff6ab0');
  grad.addColorStop(0.88, '#ff9070');
  grad.addColorStop(0.96, '#eaffd0');
  ctx.strokeStyle = grad;
  ctx.lineWidth = 2;
  line(x, TOP, x, TOP + H);
}

function addLabel(parent, text, cls) {
  const el = document.createElement('span');
  el.textContent = text;
  if (cls) el.className = cls;
  parent.appendChild(el);
  return el;
}

function buildAxes() {
  const yAxis = document.getElementById('yAxis');
  addLabel(yAxis, 's', 'unit');
  addLabel(yAxis, '1,000', 'marker');
  for (let v = 950; v >= -200; v -= 50) {
    addLabel(yAxis, v === 0 ? '0' : v + 'm', v % 100 ? 'minor' : '');
  }

  const xAxis = document.getElementById('xAxis');
  const freqs = [14, 20, 30, 40, 50, 60, 70, 80, 90, 100, 200, 300, 400, 500, 600, 700, 900,
    1000, 2000, 3000, 4000, 5000, 6000, 7000, 8000, 9000, 10000, 14000];
  freqs.forEach(f => {
    const text = f === 14000 ? '14kHz' : f >= 1000 ? f / 1000 + 'k' : f;
    addLabel(xAxis, text).style.left = (freqX(f) - LEFT) / W * 100 + '%';
  });
  addLabel(xAxis, '189', 'marker').style.left = (freqX(189) - LEFT) / W * 100 + '%';
}

drawSpectrogram();
ctx.translate(-LEFT, -TOP);
drawGrid();
drawTrace();
drawCursor();
buildAxes();
```
